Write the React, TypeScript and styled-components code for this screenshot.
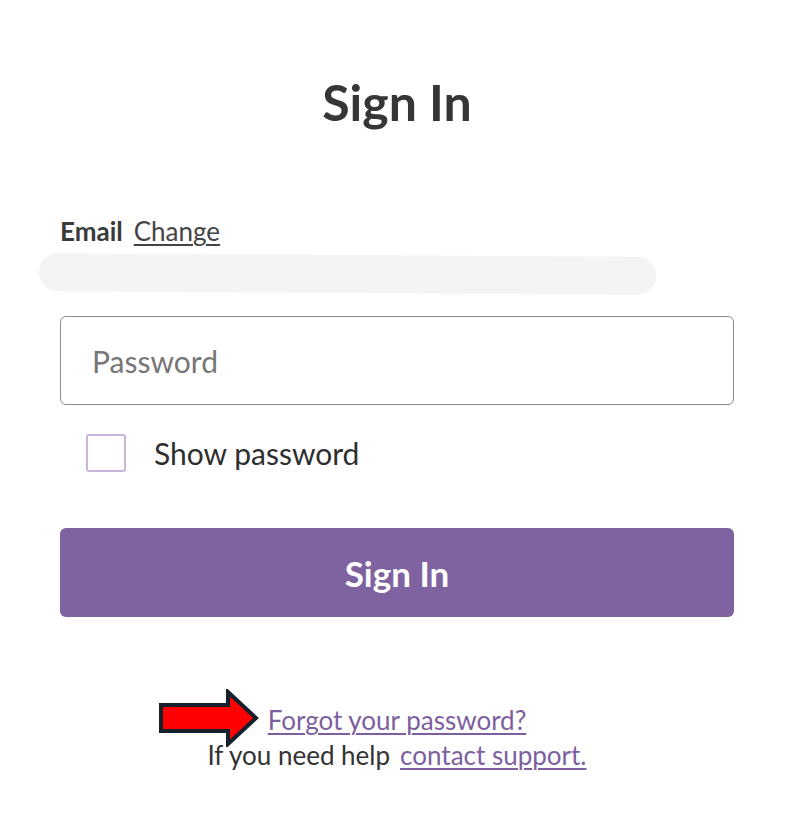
import styled, { createGlobalStyle } from 'styled-components';

const GlobalStyle = createGlobalStyle`
  body {
    margin: 0;
    background: #ffffff;
    font-family: Lato, "Liberation Sans", sans-serif;
    color: #333333;
  }
`;

const Page = styled.div`
  width: 793px;
  min-height: 837px;
  display: flex;
  justify-content: center;
`;

const Form = styled.form`
  width: 674px;
  margin-left: 1px;
  display: flex;
  flex-direction: column;
  padding-top: 72px;
`;

const Title = styled.h1`
  margin: 0;
  text-align: center;
  font-size: 50px;
  line-height: 60px;
  font-weight: 700;
  color: #363636;
`;

const EmailRow = styled.div`
  margin-top: 84px;
  display: flex;
  align-items: baseline;
  gap: 11px;
  font-size: 26px;
  line-height: 31px;
`;

const Label = styled.span`
  font-weight: 700;
  color: #3a3a3a;
`;

const Link = styled.a<{ $purple?: boolean; $size?: number }>`
  color: ${(p) => (p.$purple ? '#7d5fa0' : '#444')};
  font-size: ${(p) => p.$size ?? 26}px;
  text-decoration: underline;
  text-underline-offset: 3px;
  text-decoration-thickness: 1.5px;
  cursor: pointer;
`;

const Redacted = styled.div`
  margin: 8px 0 0 -21px;
  width: 617px;
  height: 38px;
  border-radius: 19px;
  background: #f4f4f4;
  transform: rotate(0.35deg);
`;

const PasswordInput = styled.input`
  margin-top: 23px;
  box-sizing: border-box;
  width: 100%;
  height: 89px;
  border: 1.5px solid #8c8c8c;
  border-radius: 6px;
  padding: 0 0 0 31px;
  font-family: inherit;
  font-size: 30px;
  color: #333;
  outline: none;

  &::placeholder {
    color: #767676;
  }
`;

const CheckRow = styled.label`
  margin: 29px 0 0 26px;
  display: flex;
  align-items: center;
  gap: 28px;
  font-size: 30px;
  color: #2f2f2f;
  cursor: pointer;
`;

const Box = styled.span`
  box-sizing: border-box;
  width: 40px;
  height: 38px;
  border: 2.5px solid #c8b4dc;
  border-radius: 3px;
  background: #fff;
`;

const SubmitButton = styled.button`
  margin-top: 56px;
  height: 89px;
  width: 100%;
  border: none;
  border-radius: 6px;
  background: #7f62a0;
  color: #ffffff;
  font-family: inherit;
  font-size: 35px;
  font-weight: 700;
  cursor: pointer;
`;

const Help = styled.div`
  margin-top: 86px;
  display: flex;
  flex-direction: column;
  align-items: center;
  font-size: 26px;
  line-height: 35px;
`;

const ForgotWrap = styled.div`
  position: relative;
`;

const Arrow = styled.svg`
  position: absolute;
  right: 100%;
  top: -14px;
  margin-right: 8px;
`;

const HelpLine = styled.div`
  display: flex;
  gap: 10px;
  color: #333;
`;

export default function App() {
  return (
    <Page>
      <GlobalStyle />
      <Form onSubmit={(e) => e.preventDefault()}>
        <Title>Sign In</Title>
        <EmailRow>
          <Label>Email</Label>
          <Link>Change</Link>
        </EmailRow>
        <Redacted />
        <PasswordInput type="password" placeholder="Password" />
        <CheckRow>
          <Box />
          Show password
        </CheckRow>
        <SubmitButton type="submit">Sign In</SubmitButton>
        <Help>
          <ForgotWrap>
            <Arrow width="102" height="58" viewBox="0 0 102 58">
              <polygon
                points="3,16 70,16 70,3 98,29 70,55 70,42 3,42"
                fill="#ff0000"
                stroke="#14202c"
                strokeWidth="4"
              />
            </Arrow>
            <Link $purple $size={26}>Forgot your password?</Link>
          </ForgotWrap>
          <HelpLine>
            <span>If you need help</span>
            <Link $purple $size={26}>contact support.</Link>
          </HelpLine>
        </Help>
      </Form>
    </Page>
  );
}
